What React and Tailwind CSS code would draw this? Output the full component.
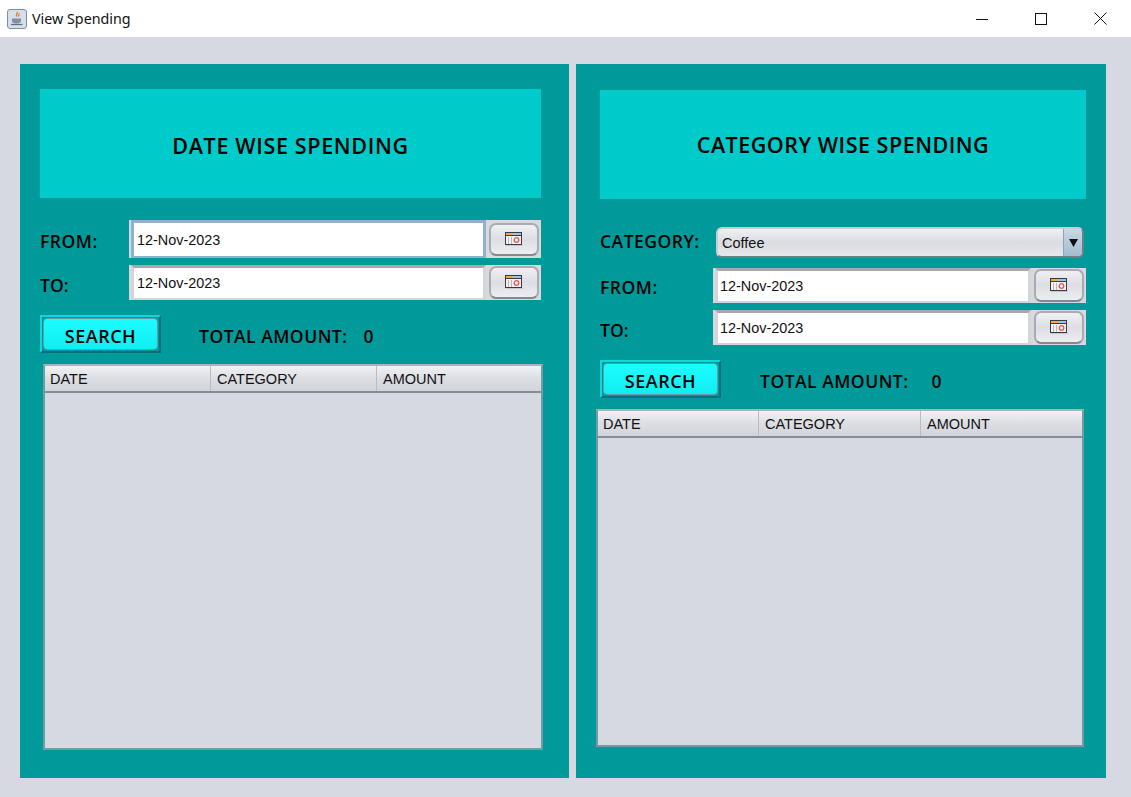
import React from 'react';

const labelFont = "font-['Open_Sans',sans-serif] font-semibold text-black";
const cellFont = "font-['Liberation_Sans',sans-serif] text-[#111]";

function CalendarIcon() {
  return (
    <svg width="18" height="15" viewBox="0 0 18 15">
      <rect x="0" y="0" width="17" height="13" fill="#3a3a3c" />
      <rect x="1" y="1" width="7" height="2" fill="#f0b040" />
      <rect x="8" y="1" width="8" height="2" fill="#9cc4e8" />
      <rect x="1" y="4" width="15" height="8" fill="#f4f2f0" />
      <rect x="3" y="5" width="1" height="7" fill="#b8b8b8" />
      <rect x="6" y="5" width="1" height="7" fill="#b8b8b8" />
      <circle cx="11.500" cy="8" r="2.300" fill="none" stroke="#e4555c" strokeWidth="1.300" />
      <rect x="1" y="13" width="17" height="1" fill="#c8c8ca" />
    </svg>
  );
}

function DatePicker({ focused, inputW, h, pad = 2 }) {
  return (
    <div className="flex items-center bg-[#d8d9dc] px-[2px]" style={{ height: h }}>
      <div
        className={`flex h-full items-center bg-white border-[3px] border-b-2 ${focused ? 'border-[#8fb0d2]' : 'border-[#d4d5d8] border-t-[#a8a9ac]'} ${cellFont} text-[14.400px] pt-[2px]`}
        style={{ width: inputW, paddingLeft: pad }}
      >
        12-Nov-2023
      </div>
      <button className="ml-[3px] flex w-[50px] items-center justify-center h-[33px] rounded-[7px] border-2 border-[#a9abb0] border-b-[#86888d] bg-gradient-to-b from-[#eff0f3] via-[#dcdee3] to-[#eceef1]">
        <CalendarIcon />
      </button>
    </div>
  );
}

function SearchButton() {
  return (
    <button className="w-[121px] h-[38px] border-2 border-[#0fd8dc] border-r-[#0a6f78] border-b-[#0a6f78] p-[1px] bg-[#009a9c]">
      <span className={`flex h-full items-center justify-center rounded-[4px] bg-gradient-to-b from-[#1cfcff] to-[#10eef2] border border-[#5f9ea3] pt-[5px] text-[18px] tracking-[0.5px] ${labelFont}`}>
        SEARCH
      </span>
    </button>
  );
}

function Table({ cols, className = '' }) {
  return (
    <div className={`flex flex-col border-2 border-[#6f9da3] border-t-[#a8b4ba] bg-[#d6d9e2] ${className}`}>
      <div className="flex h-[27px] border-b-2 border-[#868c96] bg-gradient-to-b from-[#f1f2f4] via-[#dcdee3] to-[#d2d4db]">
        {cols.map((c, i) => (
          <div
            key={c.name}
            className={`flex items-center pt-[2px] text-[14.500px] ${i === 0 ? 'pl-[5px]' : 'pl-[6px]'} ${cellFont} ${i < cols.length - 1 ? 'border-r border-[#b9bcc3]' : ''}`}
            style={{ width: c.w }}
          >
            {c.name}
          </div>
        ))}
      </div>
    </div>
  );
}

function Banner({ title, className = '' }) {
  return (
    <div className={`flex items-center justify-center bg-[#00caca] h-[109px] text-[21.500px] ${labelFont} ${className}`}>
      {title}
    </div>
  );
}

function Label({ children, width, className = '' }) {
  return (
    <span className={`text-[17.500px] tracking-[0.5px] ${labelFont} ${className}`} style={{ width }}>
      {children}
    </span>
  );
}

export default function App() {
  return (
    <div className="w-[1131px] h-[797px] overflow-hidden bg-[#d6d9e1] font-['Open_Sans',sans-serif]">
      {/* title bar */}
      <div className="flex items-center h-[37px] bg-white pl-[7px]">
        <svg width="20" height="20" viewBox="0 0 20 20">
          <rect x="0.500" y="0.500" width="19" height="19" rx="2.500" fill="#d8dee6" stroke="#7d8fa3" />
          <path d="M10 3c1.500 1.600-1.600 2.600-.4 4.600M12 4.500c.8 1-1 1.600-.3 3" stroke="#e07a2c" strokeWidth="1.300" fill="none" />
          <path d="M5 9.500h9v2.500c0 1.600-1.600 2.500-4.500 2.500S5 13.600 5 12z" fill="#7f8fa4" />
          <path d="M4 15.500h11.500" stroke="#5d6f86" strokeWidth="1.300" />
        </svg>
        <span className="ml-[5px] text-[14.300px] text-[#111] font-['Noto_Sans',sans-serif]">View Spending</span>
        <div className="ml-auto flex items-center">
          <svg width="12" height="12" viewBox="0 0 12 12" className="mr-[47px]"><path d="M0 6.500h12" stroke="#111" strokeWidth="1" /></svg>
          <svg width="12" height="12" viewBox="0 0 12 12" className="mr-[47px]"><rect x="0.500" y="0.500" width="11" height="11" fill="none" stroke="#111" /></svg>
          <svg width="13" height="13" viewBox="0 0 13 13" className="mr-[24px]"><path d="M0.500 0.500l12 12M12.500 0.500l-12 12" stroke="#111" strokeWidth="1" /></svg>
        </div>
      </div>

      <div className="flex mt-[27px] ml-[20px] gap-[7px]">
        {/* date wise */}
        <div className="w-[549px] h-[714px] bg-[#009a9a] pt-[25px] pl-[20px]">
          <Banner title="DATE WISE SPENDING" className="w-[501px] pt-[6px] tracking-[0.65px]" />
          <div className="flex items-center mt-[22px] h-[38px]">
            <Label width={89} className="pt-[4px]">FROM:</Label>
            <DatePicker focused inputW={355} h={38} pad={3} />
          </div>
          <div className="flex items-center mt-[7px] h-[35px]">
            <Label width={89} className="pt-[6px] tracking-normal">TO:</Label>
            <DatePicker inputW={355} h={35} pad={3} />
          </div>
          <div className="flex items-center mt-[15px]">
            <SearchButton />
            <Label className="ml-[38px] pt-[5px]">TOTAL AMOUNT:</Label>
            <Label className="ml-[16px] pt-[5px]">0</Label>
          </div>
          <Table
            className="mt-[11px] ml-[3px] w-[500px] h-[386px]"
            cols={[{ name: 'DATE', w: 166 }, { name: 'CATEGORY', w: 166 }, { name: 'AMOUNT', w: 164 }]}
          />
        </div>

        {/* category wise */}
        <div className="w-[530px] h-[714px] bg-[#009a9a] pt-[26px] pl-[24px]">
          <Banner title="CATEGORY WISE SPENDING" className="w-[486px] pt-[2px] tracking-[0.5px]" />
          <div className="flex items-center mt-[28px] h-[31px]">
            <Label width={116} className="pb-[3px]">CATEGORY:</Label>
            <div className="flex w-[368px] h-[31px] rounded-[6px] border-2 border-[#c9ccd3] border-b-[#6a7f8a] border-r-[#6a7f8a] overflow-hidden bg-gradient-to-b from-[#f0f1f4] via-[#dadce2] to-[#e6e8ec]">
              <span className={`flex-1 flex items-center pl-[4px] pt-[2px] text-[14.500px] ${cellFont}`}>Coffee</span>
              <span className="flex w-[19px] items-center justify-center bg-gradient-to-b from-[#c8d8e6] to-[#a4bccf] border-l border-[#8ea4b6]">
                <svg width="9" height="8" viewBox="0 0 9 8"><path d="M0 0h9L4.500 8z" fill="#111" /></svg>
              </span>
            </div>
          </div>
          <div className="flex items-center mt-[10px] h-[35px]">
            <Label width={113} className="pt-[4px]">FROM:</Label>
            <DatePicker inputW={316} h={35} pad={2} />
          </div>
          <div className="flex items-center mt-[7px] h-[35px]">
            <Label width={113} className="pt-[6px] tracking-normal">TO:</Label>
            <DatePicker inputW={316} h={35} pad={2} />
          </div>
          <div className="flex items-center mt-[15px]">
            <SearchButton />
            <Label className="ml-[39px] pt-[5px]">TOTAL AMOUNT:</Label>
            <Label className="ml-[23px] pt-[5px]">0</Label>
          </div>
          <Table
            className="mt-[11px] -ml-[4px] w-[488px] h-[338px]"
            cols={[{ name: 'DATE', w: 161 }, { name: 'CATEGORY', w: 162 }, { name: 'AMOUNT', w: 161 }]}
          />
        </div>
      </div>
    </div>
  );
}
